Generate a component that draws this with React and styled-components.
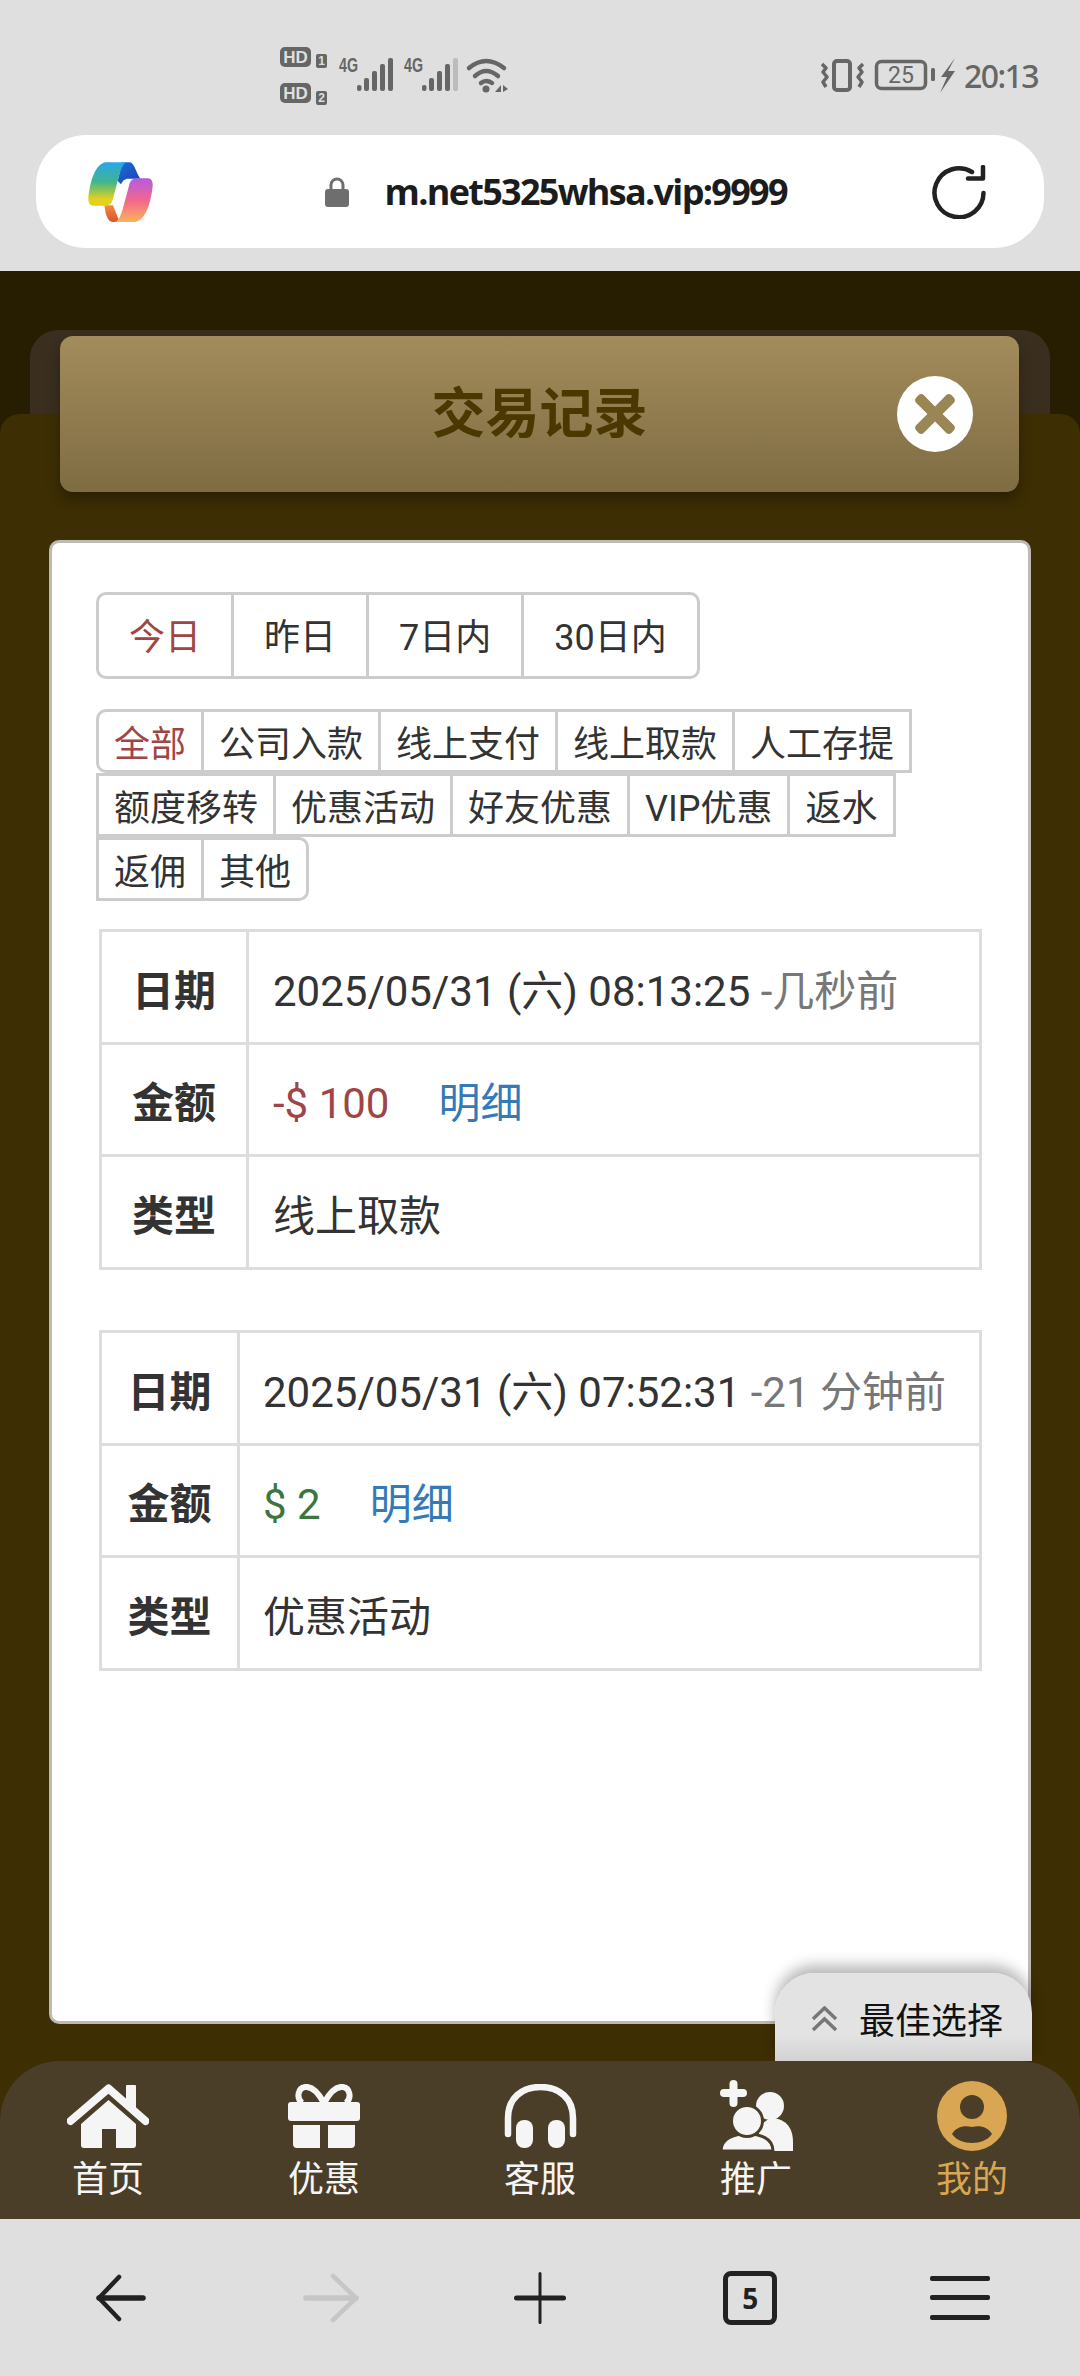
import React from 'react';
import styled, { createGlobalStyle } from 'styled-components';
import { FaTimes } from 'react-icons/fa';

const GlobalStyle = createGlobalStyle`
  html, body {
    margin: 0;
    padding: 0;
    background: #dfdfdf;
  }
  * {
    box-sizing: border-box;
  }
`;

const FONT = 'Roboto, "Noto Sans CJK SC", sans-serif';
const CJK = '"Noto Sans CJK SC", sans-serif';

const Page = styled.div`
  width: 1080px;
  height: 2376px;
  display: flex;
  flex-direction: column;
  overflow: hidden;
  background: #3d2e04;
  font-family: ${FONT};
  color: #333;
`;

const StatusBar = styled.div`
  height: 135px;
  padding: 47px 42px 0 280px;
  display: flex;
  justify-content: space-between;
  align-items: flex-start;
  background: #dfdfdf;
`;

const StatusRight = styled.div`
  display: flex;
  margin-top: 11px;
  gap: 9px;
`;

const Clock = styled.span`
  font-family: "Noto Sans", sans-serif;
  font-weight: 500;
  font-size: 32px;
  line-height: 36px;
  letter-spacing: -1.6px;
  color: #666;
`;

const UrlRow = styled.div`
  height: 136px;
  padding: 0 36px;
  background: #dfdfdf;
`;

const UrlPill = styled.div`
  height: 113px;
  padding: 0 58px 0 52px;
  border-radius: 50px;
  background: #fff;
  display: flex;
  align-items: center;
  justify-content: space-between;
`;

const UrlCenter = styled.div`
  margin-left: 22px;
  display: flex;
  align-items: center;
  gap: 36px;
`;

const UrlText = styled.span`
  width: 398px;
  font-family: "Open Sans", sans-serif;
  font-weight: 700;
  font-size: 36px;
  letter-spacing: -1.7px;
  color: #1c1c1c;
  white-space: nowrap;
`;

const Main = styled.div`
  flex: 1;
  display: flex;
  flex-direction: column;
  position: relative;
  background: #271e02;
`;

const BackTab = styled.div`
  height: 84px;
  margin: 59px 30px 0;
  border-radius: 28px 28px 0 0;
  background: #3a2f1e;
`;

const TitleBar = styled.div`
  position: absolute;
  top: 65px;
  left: 60px;
  width: 959px;
  height: 156px;
  border-radius: 13px;
  background: linear-gradient(#a38c5c, #7e6c42);
  box-shadow: 0 8px 14px rgba(0, 0, 0, 0.3);
  display: flex;
  align-items: center;
  justify-content: center;
  z-index: 1;
`;

const Title = styled.h1`
  margin: -8px 0 0;
  font-family: ${CJK};
  font-weight: 700;
  font-size: 54px;
  line-height: 1;
  color: #4a3800;
`;

const CloseButton = styled.div`
  position: absolute;
  right: 46px;
  top: 40px;
  width: 76px;
  height: 76px;
  border-radius: 50%;
  background: #fff;
  color: #9a8555;
  display: flex;
  align-items: center;
  justify-content: center;
  font-size: 58px;
`;

const Panel = styled.div`
  flex: 1;
  display: flex;
  position: relative;
  padding: 126px 49px 37px;
  border-radius: 20px 20px 0 0;
  background: #3d2e04;
`;

const Card = styled.div`
  flex: 1;
  padding: 49px 44px;
  border: 3px solid #bdbab2;
  border-radius: 10px;
  background: #fff;
`;

const DateTabs = styled.div`
  display: inline-flex;
  height: 87px;
  border: 3px solid #ccc;
  border-radius: 10px;
  vertical-align: top;
`;

const DateTab = styled.div`
  padding: 0 30px 3px;
  display: flex;
  align-items: center;
  font-size: 36px;
  color: ${props => (props.$active ? '#a04545' : '#333')};

  & + & {
    border-left: 3px solid #ccc;
  }
`;

const TypeTabs = styled.div`
  margin-top: 30px;
  display: flex;
  flex-wrap: wrap;
`;

const TypeTab = styled.div`
  height: 64px;
  margin-right: -3px;
  padding: 0 15px;
  display: flex;
  align-items: center;
  border: 3px solid #ccc;
  border-radius: ${props => props.$corners || '0'};
  font-size: 36px;
  white-space: nowrap;
  color: ${props => (props.$active ? '#a04545' : '#333')};
`;

const Table = styled.table`
  width: 883px;
  margin: ${props => props.$top}px 0 0 3px;
  border-collapse: collapse;
  table-layout: fixed;

  tr:nth-child(2) > * {
    height: 112px;
  }
`;

const LabelCell = styled.th`
  width: ${props => props.$width}px;
  height: 113px;
  padding: 0;
  border: 3px solid #ddd;
  font-size: 42px;
  font-weight: 700;
  text-align: center;
  color: #333;
`;

const ValueCell = styled.td`
  height: 113px;
  padding: 0 0 0 ${props => props.$indent}px;
  border: 3px solid #ddd;
  font-size: 42px;
  white-space: nowrap;
  color: #333;
`;

const Muted = styled.span`
  color: #777;
`;

const Amount = styled.span`
  margin-right: 49px;
  color: ${props => props.$color};
`;

const DetailLink = styled.a`
  color: #337ab7;
`;

const BestChoice = styled.div`
  position: absolute;
  right: 48px;
  bottom: 0;
  width: 257px;
  height: 88px;
  padding: 25px 0 0 36px;
  border-radius: 40px 40px 0 0;
  background: linear-gradient(#e3e3e3 70%, #d2d2d2);
  box-shadow: 0 -8px 14px rgba(0, 0, 0, 0.28);
  display: flex;
  align-items: flex-start;
  gap: 21px;
  font-family: ${CJK};
  font-size: 36px;
  line-height: 40px;
  color: #111;
`;

const ChevronBox = styled.div`
  display: flex;
  padding-top: 8px;
`;

const BottomNav = styled.nav`
  height: 158px;
  padding-top: 20px;
  border-radius: 60px 60px 0 0;
  background: #4a3e28;
  display: grid;
  grid-template-columns: repeat(5, 1fr);
  position: relative;
  z-index: 2;
`;

const NavItem = styled.div`
  display: flex;
  flex-direction: column;
  align-items: center;
  color: ${props => (props.$active ? '#d9a653' : '#f5f5f5')};
`;

const NavIcon = styled.div`
  height: 70px;
  display: flex;
  align-items: center;
  justify-content: center;
`;

const NavLabel = styled.span`
  margin-top: 5px;
  font-family: ${CJK};
  font-size: 36px;
  line-height: 40px;
`;

const BrowserBar = styled.div`
  height: 157px;
  padding: 0 15px 0 16px;
  background: #dfdfdf;
  display: grid;
  grid-template-columns: repeat(5, 1fr);
  justify-items: center;
  align-items: center;
`;

const TabCount = styled.div`
  width: 54px;
  height: 54px;
  border: 5px solid #222;
  border-radius: 8px;
  display: flex;
  align-items: center;
  justify-content: center;
  font-family: "Open Sans", sans-serif;
  font-weight: 700;
  font-size: 28px;
  color: #222;
`;

const SignalBars = ({ x, dim }) => (
  <g transform={`translate(${x} 0)`} fill="#666">
    <rect x="0" y="38" width="4.5" height="6" rx="2" />
    <rect x="7" y="31" width="5" height="13" rx="2" />
    <rect x="15" y="24" width="5" height="20" rx="2" />
    <rect x="23" y="17" width="5" height="27" rx="2" />
    <rect x="31" y="11" width="5" height="33" rx="2" fill={dim ? '#bcbcbc' : '#666'} />
  </g>
);

const badgeText = { fontFamily: '"Liberation Sans", sans-serif', fontWeight: 700 };

const StatusLeftIcons = () => (
  <svg width="230" height="60" viewBox="0 0 230 60">
    <rect x="0" y="0" width="31" height="20" rx="5" fill="#666" />
    <text x="15.5" y="16" fontSize="17" textAnchor="middle" fill="#dfdfdf" style={badgeText}>HD</text>
    <rect x="36" y="7" width="11" height="14" rx="2" fill="#666" />
    <text x="41.5" y="18" fontSize="12" textAnchor="middle" fill="#dfdfdf" style={badgeText}>1</text>
    <rect x="0" y="36" width="31" height="20" rx="5" fill="#666" />
    <text x="15.5" y="52" fontSize="17" textAnchor="middle" fill="#dfdfdf" style={badgeText}>HD</text>
    <rect x="36" y="44" width="11" height="14" rx="2" fill="#666" />
    <text x="41.5" y="55" fontSize="12" textAnchor="middle" fill="#dfdfdf" style={badgeText}>2</text>
    <text x="59" y="25" fontSize="19.5" fill="#666" textLength="19" lengthAdjust="spacingAndGlyphs" style={badgeText}>4G</text>
    <SignalBars x={77} />
    <text x="124" y="25" fontSize="19.5" fill="#666" textLength="19" lengthAdjust="spacingAndGlyphs" style={badgeText}>4G</text>
    <SignalBars x={142} dim />
    <g fill="none" stroke="#666" strokeWidth="4.5" strokeLinecap="round">
      <path d="M189 21 Q206 7 224 21" />
      <path d="M195 29 Q206 19 218 29" />
      <path d="M201 36 Q206 32 212 36" />
    </g>
    <circle cx="206" cy="42" r="3.5" fill="#666" />
    <path d="M221 38 V45 H215 Z M223 38 L228 42 L223 45 Z" fill="#666" />
  </svg>
);

const StatusRightIcons = () => (
  <svg width="134" height="36" viewBox="0 0 134 36">
    <g fill="none" stroke="#666" strokeWidth="3.5" strokeLinejoin="round">
      <path d="M1 6 L5 10 L2 14 L6 19 L2 24 L5 29" />
      <path d="M41 6 L37 10 L40 14 L36 19 L40 24 L37 29" transform="translate(1 0)" />
      <rect x="13" y="3" width="16" height="29" rx="3" strokeWidth="4" />
      <rect x="55.5" y="3.5" width="49" height="27" rx="5" />
    </g>
    <text x="80" y="25" fontSize="23" textAnchor="middle" fill="#666" fontFamily="Roboto, sans-serif">25</text>
    <rect x="110" y="10" width="4" height="13" rx="1.5" fill="#666" />
    <path d="M134 0 L120 19 L126 19 L119 35 L134 13 L127 13 Z" fill="#666" />
  </svg>
);

const CopilotLogo = () => (
  <svg width="65" height="60" viewBox="83 65 195 180">
    <defs>
      <linearGradient id="copilotLeft" x1="0" y1="0" x2="0" y2="1">
        <stop offset="0" stopColor="#2aa7ea" />
        <stop offset="0.45" stopColor="#3fb58f" />
        <stop offset="0.85" stopColor="#e4d21a" />
      </linearGradient>
      <linearGradient id="copilotRight" x1="0" y1="0" x2="0" y2="1">
        <stop offset="0" stopColor="#b45ce0" />
        <stop offset="0.5" stopColor="#f2668f" />
        <stop offset="1" stopColor="#fbb25a" />
      </linearGradient>
      <linearGradient id="copilotDark" x1="0" y1="0" x2="1" y2="1">
        <stop offset="0" stopColor="#1a6fd8" />
        <stop offset="1" stopColor="#1c3fb0" />
      </linearGradient>
      <linearGradient id="copilotLow" x1="0" y1="0" x2="0" y2="1">
        <stop offset="0" stopColor="#f08a3c" />
        <stop offset="1" stopColor="#e0502f" />
      </linearGradient>
    </defs>
    <path d="M185 66 H208 C222 68 226 94 240 115 H205 C192 115 186 122 182 132 L172 122 Z" fill="url(#copilotDark)" />
    <path d="M132 195 H158 L178 245 H158 C146 245 140 232 136 218 Z" fill="url(#copilotLow)" />
    <path d="M135 66 H200 C186 70 180 92 172 122 L158 175 C154 190 148 196 132 196 H100 C88 196 83 186 84 172 C90 120 105 72 135 66 Z" fill="url(#copilotLeft)" />
    <path d="M226 245 H164 C178 240 184 218 192 188 L206 136 C210 120 216 114 232 114 H262 C274 114 278 124 277 138 C271 190 256 238 226 245 Z" fill="url(#copilotRight)" />
  </svg>
);

const LockIcon = () => (
  <svg width="24" height="30" viewBox="0 0 24 30" fill="#6e6e6e">
    <path d="M6 14 V8 a6 6 0 0 1 12 0 V14" fill="none" stroke="#6e6e6e" strokeWidth="3" />
    <rect x="0" y="12" width="24" height="18" rx="3" />
  </svg>
);

const RefreshIcon = () => (
  <svg width="54" height="54" viewBox="0 0 54 54" fill="none" stroke="#222" strokeWidth="4.5" strokeLinecap="round" strokeLinejoin="round">
    <path d="M40 7 A24.5 24.5 0 1 0 51.5 28" />
    <path d="M36 13.5 H51 V2" />
  </svg>
);

const DoubleChevron = () => (
  <svg width="27" height="26" viewBox="0 0 27 26" fill="none" stroke="#777" strokeWidth="3.5">
    <path d="M2 13 L13.5 2 L25 13" />
    <path d="M2 24 L13.5 13 L25 24" />
  </svg>
);

const HomeIcon = () => (
  <svg width="82" height="64" viewBox="0 0 82 64" fill="currentColor">
    <path d="M3.5 37 L41.5 4.5 L78.5 37" fill="none" stroke="currentColor" strokeWidth="8" strokeLinecap="round" strokeLinejoin="round" />
    <rect x="59" y="1" width="10" height="24" rx="1" />
    <path d="M14 40 L41.5 16 L69 40 V61 a3 3 0 0 1 -3 3 H49 V45 H35 V64 H17 a3 3 0 0 1 -3 -3 Z" />
  </svg>
);

const GiftIcon = () => (
  <svg width="72" height="64" viewBox="0 0 72 64" fill="currentColor">
    <path d="M36 19 C30 8 24 2 17 3 C10 4 8 14 14 19 M36 19 C42 8 48 2 55 3 C62 4 64 14 58 19" fill="none" stroke="currentColor" strokeWidth="6" />
    <rect x="0" y="18" width="72" height="19" rx="3" />
    <path d="M5 41 H32 V64 H9 a4 4 0 0 1 -4 -4 Z M40 41 H67 V60 a4 4 0 0 1 -4 4 H40 Z" />
  </svg>
);

const HeadsetIcon = () => (
  <svg width="73" height="64" viewBox="0 0 73 64" fill="currentColor">
    <path d="M4 50 V34 C4 14 18 3 36.5 3 C55 3 69 14 69 34 V50" fill="none" stroke="currentColor" strokeWidth="6.5" strokeLinecap="round" />
    <rect x="12" y="36" width="17" height="28" rx="8" />
    <rect x="44" y="36" width="17" height="28" rx="8" />
  </svg>
);

const PromoIcon = () => (
  <svg width="73" height="72" viewBox="0 0 73 72" fill="currentColor">
    <rect x="0" y="9" width="27" height="8" rx="4" />
    <rect x="9.5" y="0" width="8" height="27" rx="4" />
    <circle cx="50" cy="26" r="14" />
    <path d="M50 38 C64 38 73 46 73 62 V71 H48 L36 48 Z" />
    <path d="M1 71 C1 58 14 54 27 54 C40 54 53 58 53 71 Z" stroke="#4a3e28" strokeWidth="3" />
    <circle cx="27" cy="41" r="15.5" stroke="#4a3e28" strokeWidth="3" />
    <path d="M1 71 H53 V73 H1 Z" fill="#4a3e28" />
  </svg>
);

const ProfileIcon = () => (
  <svg width="70" height="70" viewBox="0 0 70 70">
    <circle cx="35" cy="35" r="35" fill="currentColor" />
    <circle cx="35" cy="26" r="12" fill="#4a3e28" />
    <path d="M15 53 C19 46 27 44 35 46 C43 44 51 46 55 53 C51 59 43 62 35 62 C27 62 19 59 15 53 Z" fill="#4a3e28" />
  </svg>
);

const BackIcon = () => (
  <svg width="50" height="48" viewBox="0 0 50 48" fill="none" stroke="#222" strokeWidth="4.5" strokeLinecap="round" strokeLinejoin="round">
    <path d="M23 3 L3 24 L23 45" />
    <path d="M3 24 H47" strokeWidth="5.5" />
  </svg>
);

const ForwardIcon = () => (
  <svg width="56" height="50" viewBox="0 0 56 50" fill="none" stroke="#c6c6c6" strokeWidth="4.5" strokeLinecap="round" strokeLinejoin="round">
    <path d="M30 3 L53 25 L30 47" />
    <path d="M3 25 H53" strokeWidth="5.5" />
  </svg>
);

const PlusIcon = () => (
  <svg width="54" height="52" viewBox="0 0 54 52" fill="#222">
    <rect x="1" y="23.5" width="52" height="5" rx="2.5" />
    <rect x="25.5" y="0" width="3" height="52" rx="1.5" />
  </svg>
);

const MenuIcon = () => (
  <svg width="60" height="46" viewBox="0 0 60 46" fill="#222">
    <rect x="0" y="1" width="60" height="5" rx="2" />
    <rect x="0" y="20" width="60" height="5" rx="2" />
    <rect x="0" y="40" width="60" height="5" rx="2" />
  </svg>
);

const dateTabs = ['今日', '昨日', '7日内', '30日内'];
const typeTabs = [
  '全部', '公司入款', '线上支付', '线上取款', '人工存提', '额度移转',
  '优惠活动', '好友优惠', 'VIP优惠', '返水', '返佣', '其他',
];

const navItems = [
  { label: '首页', Icon: HomeIcon },
  { label: '优惠', Icon: GiftIcon },
  { label: '客服', Icon: HeadsetIcon },
  { label: '推广', Icon: PromoIcon },
  { label: '我的', Icon: ProfileIcon, active: true },
];

const records = [
  {
    date: '2025/05/31 (六) 08:13:25',
    ago: ' -几秒前',
    amount: '-$ 100',
    color: '#a04545',
    type: '线上取款',
    labelWidth: 147,
    indent: 24,
    top: 28,
  },
  {
    date: '2025/05/31 (六) 07:52:31',
    ago: ' -21 分钟前',
    amount: '$ 2',
    color: '#3c763d',
    type: '优惠活动',
    labelWidth: 138,
    indent: 23,
    top: 60,
  },
];

const tabCorners = index => {
  if (index === 0) return '10px 0 0 10px';
  if (index === typeTabs.length - 1) return '0 10px 10px 0';
  return '0';
};

const RecordTable = ({ record }) => (
  <Table $top={record.top}>
    <tbody>
      <tr>
        <LabelCell $width={record.labelWidth}>日期</LabelCell>
        <ValueCell $indent={record.indent}>
          {record.date}
          <Muted>{record.ago}</Muted>
        </ValueCell>
      </tr>
      <tr>
        <LabelCell $width={record.labelWidth}>金额</LabelCell>
        <ValueCell $indent={record.indent}>
          <Amount $color={record.color}>{record.amount}</Amount>
          <DetailLink>明细</DetailLink>
        </ValueCell>
      </tr>
      <tr>
        <LabelCell $width={record.labelWidth}>类型</LabelCell>
        <ValueCell $indent={record.indent}>{record.type}</ValueCell>
      </tr>
    </tbody>
  </Table>
);

export default function App() {
  return (
    <Page>
      <GlobalStyle />
      <StatusBar>
        <StatusLeftIcons />
        <StatusRight>
          <StatusRightIcons />
          <Clock>20:13</Clock>
        </StatusRight>
      </StatusBar>
      <UrlRow>
        <UrlPill>
          <CopilotLogo />
          <UrlCenter>
            <LockIcon />
            <UrlText>m.net5325whsa.vip:9999</UrlText>
          </UrlCenter>
          <RefreshIcon />
        </UrlPill>
      </UrlRow>
      <Main>
        <BackTab />
        <TitleBar>
          <Title>交易记录</Title>
          <CloseButton>
            <FaTimes />
          </CloseButton>
        </TitleBar>
        <Panel>
          <Card>
            <DateTabs>
              {dateTabs.map((tab, index) => (
                <DateTab key={tab} $active={index === 0}>{tab}</DateTab>
              ))}
            </DateTabs>
            <TypeTabs>
              {typeTabs.map((tab, index) => (
                <TypeTab key={tab} $active={index === 0} $corners={tabCorners(index)}>{tab}</TypeTab>
              ))}
            </TypeTabs>
            {records.map(record => (
              <RecordTable key={record.date} record={record} />
            ))}
          </Card>
          <BestChoice>
            <ChevronBox>
              <DoubleChevron />
            </ChevronBox>
            最佳选择
          </BestChoice>
        </Panel>
      </Main>
      <BottomNav>
        {navItems.map(({ label, Icon, active }) => (
          <NavItem key={label} $active={active}>
            <NavIcon>
              <Icon />
            </NavIcon>
            <NavLabel>{label}</NavLabel>
          </NavItem>
        ))}
      </BottomNav>
      <BrowserBar>
        <BackIcon />
        <ForwardIcon />
        <PlusIcon />
        <TabCount>5</TabCount>
        <MenuIcon />
      </BrowserBar>
    </Page>
  );
}
